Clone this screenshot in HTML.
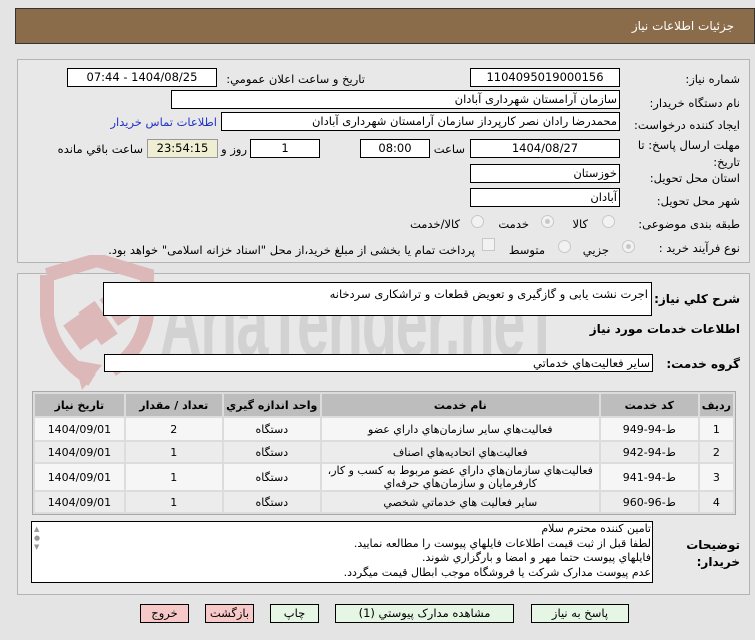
<!DOCTYPE html>
<html><head><meta charset="utf-8">
<style>
*{margin:0;padding:0;box-sizing:border-box}
body{width:755px;height:640px;background:#e4e4e4;font-family:"DejaVu Sans","Liberation Sans",sans-serif;font-size:11.5px;color:#000;position:relative;overflow:hidden}
.a{position:absolute;white-space:nowrap}
.r{direction:rtl;text-align:right}
.in{position:absolute;background:#fff;border:1px solid #000;height:19px;line-height:17px;direction:rtl;white-space:nowrap;overflow:hidden}
.c{text-align:center}
.panel{position:absolute;border:1px solid #b4b4b4;background:#e8e8e8}
.rad{position:absolute;width:13px;height:13px;border-radius:50%;border:1px solid #c8c8c8;background:#f2f2f2}
.rad.on::after{content:"";position:absolute;left:3px;top:3px;width:5px;height:5px;border-radius:50%;background:#c8c8c8}
table{position:absolute;border-collapse:separate;border-spacing:2px;background:#dcdcdc;border:1px solid #a8a8a8;direction:rtl;font-size:11px}
td,th{text-align:center;padding:0 2px}
th{background:#bdbdbd;height:22px;font-weight:bold}
tr.o td{background:#f6f6f6}
tr.e td{background:#ececec}
.btn{position:absolute;height:19px;border:1px solid #000;line-height:17px;text-align:center;font-size:11.5px}
.g{background:#e6f6e4}.p{background:#f7c8c8}
</style></head><body>
<div class="a" style="left:15px;top:8px;width:740px;height:36px;background:#8a6c4a;border:1px solid #333"></div>
<div class="a r" style="right:21px;top:19px;color:#fff;font-size:12px">جزئيات اطلاعات نياز</div>

<div class="panel" style="left:17px;top:59px;width:733px;height:204px"></div>
<div class="panel" style="left:17px;top:273px;width:733px;height:322px"></div>

<!-- watermark -->
<svg class="a" style="left:22px;top:255px" width="200" height="140" viewBox="0 0 200 140">
<path d="M25 20 L75 5 L125 20 L125 60 Q120 95 90 115" fill="none" stroke="#dcb8b8" stroke-width="14"/>
<path d="M25 20 L25 60 Q30 100 70 125" fill="none" stroke="#dcb8b8" stroke-width="14"/>
<path d="M60 135 L80 110 L52 105 Z" fill="#dcb8b8"/>
<g fill="#dcb8b8"><rect x="48" y="62" width="20" height="30" transform="rotate(-35 58 77)"/><rect x="66" y="48" width="20" height="40" transform="rotate(-35 76 68)"/><rect x="85" y="36" width="20" height="32" transform="rotate(-35 95 52)"/></g>
</svg>
<div class="a" style="left:160px;top:268px;font-size:96px;font-weight:bold;color:#d2d2d2;letter-spacing:-2px;font-family:'Liberation Sans',sans-serif;transform:scaleX(0.6);transform-origin:left top">AriaTender.neT</div>

<div class="a r" style="right:15px;top:72px">شماره نياز:</div>
<div class="in c" style="left:470px;top:68px;width:150px">1104095019000156</div>
<div class="a r" style="right:390px;top:72px">تاريخ و ساعت اعلان عمومي:</div>
<div class="in c" style="left:67px;top:68px;width:150px">1404/08/25 - 07:44</div>

<div class="a r" style="right:15px;top:96px">نام دستگاه خريدار:</div>
<div class="in" style="left:171px;top:90px;width:449px;padding-right:2px">سازمان آرامستان شهرداری آبادان</div>

<div class="a r" style="right:15px;top:118px">ايجاد کننده درخواست:</div>
<div class="in" style="left:221px;top:112px;width:399px;padding-right:2px">محمدرضا رادان نصر کارپرداز سازمان آرامستان شهرداری آبادان</div>
<div class="a r" style="right:538px;top:115px;color:#2233cc">اطلاعات تماس خريدار</div>

<div class="a r" style="right:15px;top:138px">مهلت ارسال پاسخ: تا</div>
<div class="a r" style="right:15px;top:155px">تاريخ:</div>
<div class="in c" style="left:470px;top:139px;width:150px">1404/08/27</div>
<div class="a r" style="right:290px;top:142px">ساعت</div>
<div class="in c" style="left:360px;top:139px;width:70px">08:00</div>
<div class="in c" style="left:250px;top:139px;width:70px">1</div>
<div class="a r" style="right:508px;top:142px">روز و</div>
<div class="in c" style="left:147px;top:139px;width:71px;background:#efeed2;border-color:#999">23:54:15</div>
<div class="a r" style="right:612px;top:142px">ساعت باقي مانده</div>

<div class="a r" style="right:15px;top:171px">استان محل تحويل:</div>
<div class="in" style="left:470px;top:164px;width:150px;padding-right:2px">خوزستان</div>
<div class="a r" style="right:15px;top:194px">شهر محل تحويل:</div>
<div class="in" style="left:470px;top:188px;width:150px;padding-right:2px">آبادان</div>

<div class="a r" style="right:15px;top:217px">طبقه بندی موضوعی:</div>
<div class="rad" style="left:602px;top:215px"></div><div class="a r" style="right:167px;top:217px">کالا</div>
<div class="rad on" style="left:541px;top:215px"></div><div class="a r" style="right:226px;top:217px">خدمت</div>
<div class="rad" style="left:471px;top:215px"></div><div class="a r" style="right:295px;top:217px">کالا/خدمت</div>

<div class="a r" style="right:15px;top:241px">نوع فرآيند خريد :</div>
<div class="rad on" style="left:622px;top:240px"></div><div class="a r" style="right:146px;top:243px">جزيي</div>
<div class="rad" style="left:558px;top:240px"></div><div class="a r" style="right:210px;top:243px">متوسط</div>
<div class="a" style="left:482px;top:238px;width:13px;height:13px;border:1px solid #c8c8c8;background:#f2f2f2"></div>
<div class="a r" style="right:280px;top:243px">پرداخت تمام يا بخشی از مبلغ خريد،از محل "اسناد خزانه اسلامی" خواهد بود.</div>

<div class="a r" style="right:15px;top:292px;font-weight:bold;font-size:12px">شرح کلي نياز:</div>
<div class="in" style="left:103px;top:282px;width:549px;height:34px;padding:3px 3px;background:#fff">اجرت نشت یابی و گازگیری و تعویض قطعات و تراشکاری سردخانه</div>
<div class="a r" style="right:15px;top:322px;font-weight:bold;font-size:12px">اطلاعات خدمات مورد نياز</div>
<div class="a r" style="right:15px;top:357px;font-weight:bold;font-size:12px">گروه خدمت:</div>
<div class="in" style="left:104px;top:354px;width:549px;height:18px;line-height:16px;padding-right:2px">ساير فعاليت‌هاي خدماتي</div>

<table style="left:32px;top:391px;width:704px">
<tr><th style="width:25px">رديف</th><th style="width:97px">کد خدمت</th><th style="width:277px">نام خدمت</th><th style="width:96px">واحد اندازه گيري</th><th style="width:96px">تعداد / مقدار</th><th>تاريخ نياز</th></tr>
<tr class="o" style="height:22px"><td>1</td><td>ط-94-949</td><td>فعاليت‌هاي ساير سازمان‌هاي داراي عضو</td><td>دستگاه</td><td>2</td><td>1404/09/01</td></tr>
<tr class="e" style="height:20px"><td>2</td><td>ط-94-942</td><td>فعاليت‌هاي اتحاديه‌هاي اصناف</td><td>دستگاه</td><td>1</td><td>1404/09/01</td></tr>
<tr class="o" style="height:26px"><td>3</td><td>ط-94-941</td><td style="line-height:13px">فعاليت‌هاي سازمان‌هاي داراي عضو مربوط به کسب و کار، کارفرمايان و سازمان‌هاي حرفه‌اي</td><td>دستگاه</td><td>1</td><td>1404/09/01</td></tr>
<tr class="e" style="height:20px"><td>4</td><td>ط-96-960</td><td>ساير فعاليت هاي خدماتي شخصي</td><td>دستگاه</td><td>1</td><td>1404/09/01</td></tr>
</table>

<div class="a r" style="right:15px;top:538px;font-weight:bold;font-size:12px">توضيحات</div>
<div class="a r" style="right:15px;top:555px;font-weight:bold;font-size:12px">خريدار:</div>
<div class="a" style="left:31px;top:521px;width:622px;height:62px;background:#fff;border:1px solid #000"></div>
<div class="a r" style="right:104px;top:522px;line-height:14.5px;font-size:11px">تامين کننده محترم سلام<br>لطفا قبل از ثبت قيمت اطلاعات فايلهاي پيوست را مطالعه نماييد.<br>فايلهاي پيوست حتما مهر و امضا و بارگزاري شوند.<br>عدم پيوست مدارک شرکت يا فروشگاه موجب ابطال قيمت ميگردد.</div>
<div class="a" style="left:34px;top:525px;font-size:7px;color:#999;line-height:9px">▲<br>●<br>▼</div>

<div class="btn g" style="left:531px;top:604px;width:98px">پاسخ به نياز</div>
<div class="btn g" style="left:335px;top:604px;width:179px">مشاهده مدارک پيوستي (1)</div>
<div class="btn g" style="left:270px;top:604px;width:49px">چاپ</div>
<div class="btn p" style="left:205px;top:604px;width:49px">بازگشت</div>
<div class="btn p" style="left:140px;top:604px;width:49px">خروج</div>
</body></html>
